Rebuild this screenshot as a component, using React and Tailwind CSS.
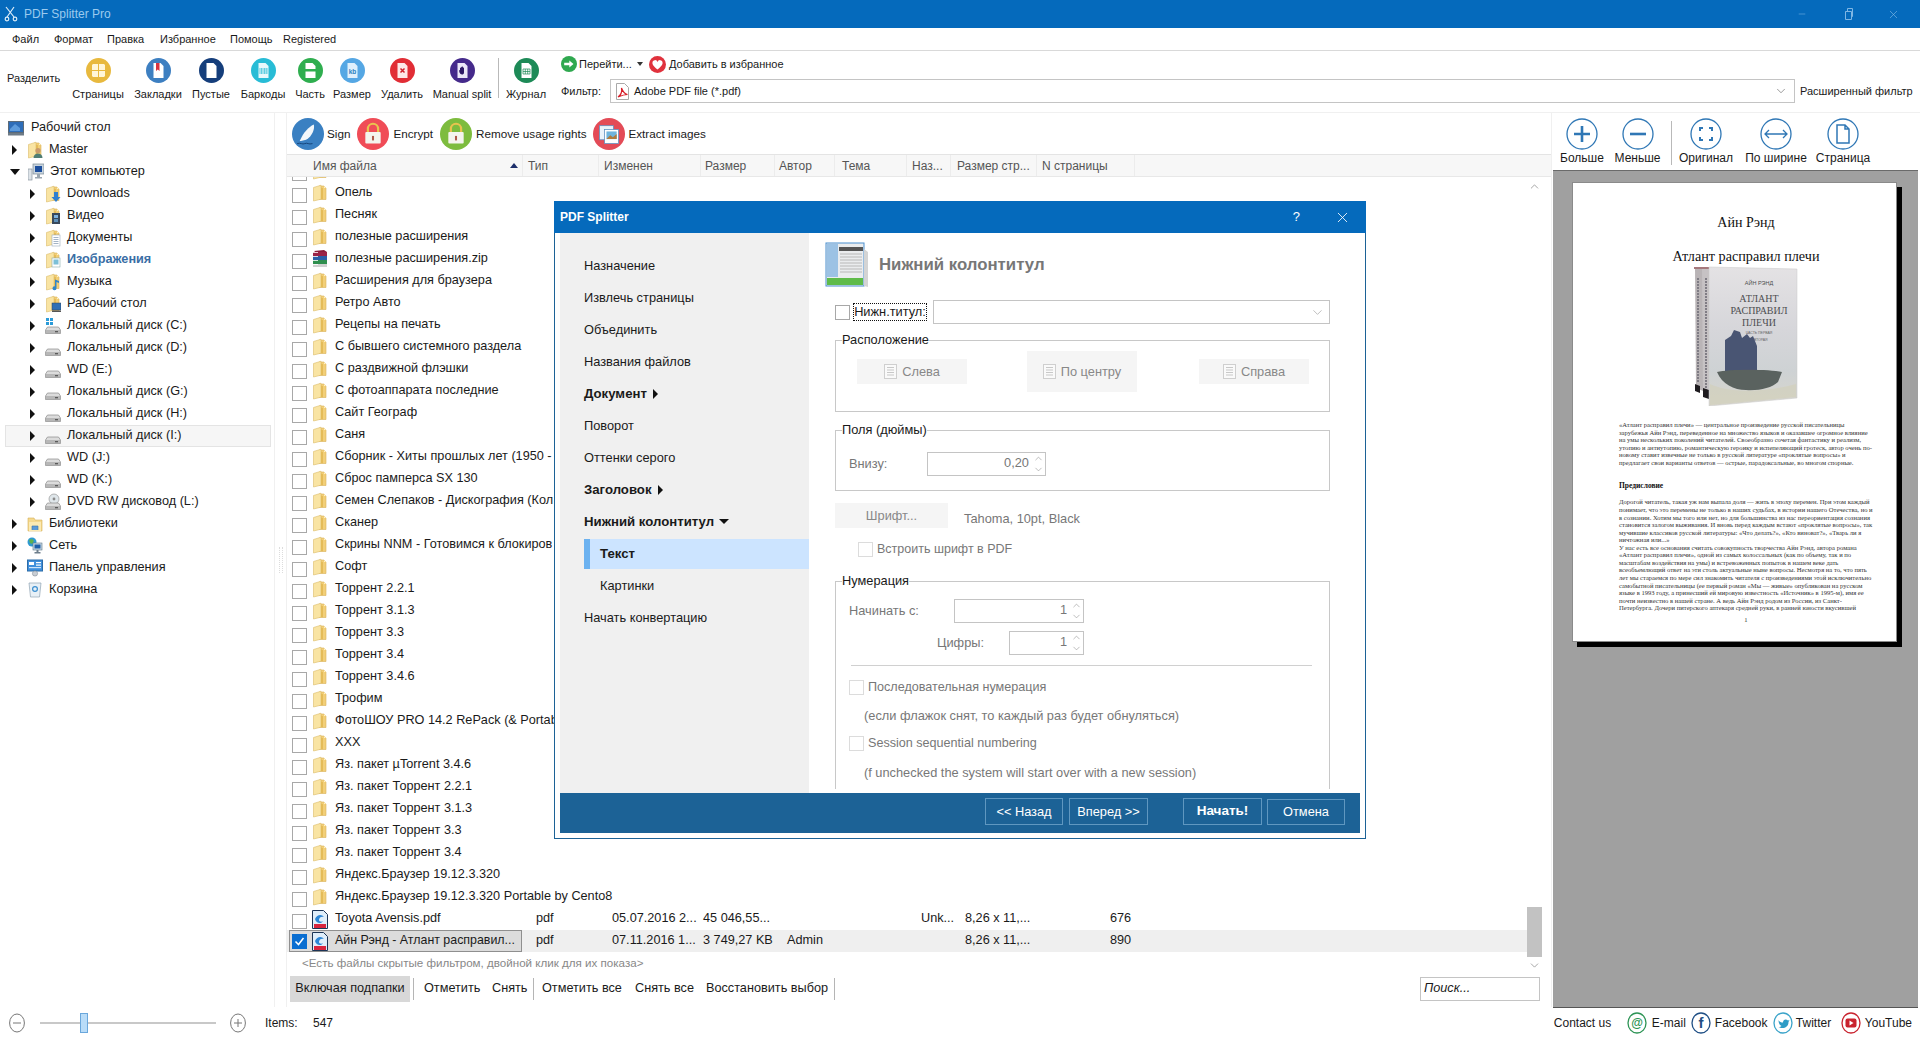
import { ChevronDown, ChevronUp, X, Minus } from 'lucide-react'

const Folder = () => (
  <svg width="16" height="18" viewBox="0 0 16 18" className="shrink-0">
    <path d="M7 2h5l2 2v11.5H7z" fill="#f2cf78" stroke="#d8b25c" strokeWidth=".6" />
    <path d="M12 2l2 2h-2z" fill="#fff3c9" />
    <path d="M1.5 3.5L9 1.2v14L1.5 17z" fill="#f9e4a3" stroke="#dcbc69" strokeWidth=".6" />
    <path d="M9 3.5l2 .8v11l-2-.2z" fill="#e4bb58" />
  </svg>
)

const FolderBadge = ({ kind }) => (
  <span className="relative flex h-[18px] w-4 shrink-0">
    <Folder />
    <svg width="12" height="13" viewBox="0 0 12 13" className="absolute left-[4px] top-[5px]">
      {kind === 'user' && <><circle cx="7" cy="4.5" r="2.6" fill="#c99a6c" /><path d="M2.5 12c0-3 2-4.5 4.5-4.5s4.5 1.5 4.5 4.5z" fill="#4f7d74" /></>}
      {kind === 'down' && <path d="M5 2h4v5h2.5L7 12 2.5 7H5z" fill="#2f7fd0" />}
      {kind === 'video' && <><rect x="3" y="1" width="8" height="11" fill="#38495c" /><rect x="5" y="3" width="4" height="3" fill="#7cb2df" /><rect x="5" y="7" width="4" height="3" fill="#5c8fba" /></>}
      {kind === 'doc' && <><rect x="3" y="1" width="8" height="11" fill="#fff" stroke="#9ab" strokeWidth=".6" /><path d="M4.5 3.5h5M4.5 5.5h5M4.5 7.5h5M4.5 9.5h5" stroke="#7c93ad" strokeWidth=".7" /></>}
      {kind === 'image' && <><rect x="3" y="2" width="8" height="9" fill="#fff" stroke="#8aa" strokeWidth=".6" /><rect x="4.5" y="3.5" width="5" height="5" fill="#7cc0d8" /></>}
      {kind === 'music' && <path d="M6 1.5l4 1.5v2L7.5 4v6.2A2 2 0 1 1 6 8.4z" fill="#2f86c8" />}
      {kind === 'desk' && <><rect x="3" y="3" width="9" height="7" fill="#2e6fb5" stroke="#345" strokeWidth=".5" /><rect x="3" y="10.5" width="9" height="1.5" fill="#555" /></>}
    </svg>
  </span>
)

const Drive = ({ os, disc }) => (
  <svg width="16" height="18" viewBox="0 0 16 18" className="shrink-0">
    {os && <path d="M1 1h3v3H1zM5 1h3v3H5zM1 5h3v3H1zM5 5h3v3H5z" fill="#2b9bd8" />}
    {disc && <><circle cx="9" cy="6" r="5" fill="#dfe6ea" stroke="#8a8a8a" strokeWidth=".6" /><circle cx="9" cy="6" r="1.4" fill="#8a8a8a" /></>}
    <path d="M2.5 10h11l2 3v3.5H.5V13z" fill="#dcdcdc" stroke="#8a8a8a" strokeWidth=".7" />
    <rect x="1" y="13" width="14" height="3" fill="#b7b7b7" />
    <rect x="10" y="14" width="3" height="1.3" fill="#5a5a5a" />
  </svg>
)

const Desktop = () => (
  <svg width="16" height="15" viewBox="0 0 16 15" className="shrink-0">
    <rect x=".5" y=".5" width="15" height="11" fill="#2e6db8" stroke="#5d6b78" />
    <path d="M2 8l5-5 5 4v3H2z" fill="#5d9bdc" />
    <rect y="12" width="16" height="2.5" fill="#6e7b86" />
  </svg>
)

const Computer = () => (
  <svg width="16" height="18" viewBox="0 0 16 18" className="shrink-0">
    <rect x="5" y="1" width="11" height="10" fill="#c8d4de" stroke="#7b8a96" strokeWidth=".7" />
    <rect x="7" y="3" width="7" height="6" fill="#1d4f9e" />
    <rect x="0" y="6" width="4" height="11" fill="#dde3e8" stroke="#8a96a0" strokeWidth=".7" />
    <path d="M9 11h3v3h2v1.5H7V14h2z" fill="#9aa6b0" />
  </svg>
)

const Libraries = () => (
  <svg width="16" height="18" viewBox="0 0 16 18" className="shrink-0">
    <path d="M1 3h6l1 2h7v11H1z" fill="#f5d98e" stroke="#d3ae58" strokeWidth=".6" />
    <rect x="2" y="7" width="12" height="9" fill="#fbeab4" />
    <path d="M5 15v-4h6v4" fill="#5a9ad8" stroke="#3a72ac" strokeWidth=".6" />
  </svg>
)

const Network = () => (
  <svg width="16" height="18" viewBox="0 0 16 18" className="shrink-0">
    <circle cx="5" cy="5" r="4.5" fill="#2f9ad1" />
    <path d="M2 3l3-1 2 2-2 3-2-1z" fill="#5fb04f" />
    <rect x="6" y="6" width="9" height="7" fill="#c8d8e4" stroke="#5d7588" strokeWidth=".6" />
    <rect x="7.5" y="7.5" width="6" height="4" fill="#1e5ea8" />
    <path d="M9.5 13h2v2h2v1.5h-6V15h2z" fill="#6e7e8c" />
  </svg>
)

const ControlPanel = () => (
  <svg width="16" height="18" viewBox="0 0 16 18" className="shrink-0">
    <rect x=".5" y="1" width="15" height="11" fill="#3f8fdc" stroke="#2d6ca8" />
    <rect x="2" y="3" width="5" height="3" fill="#fff" />
    <rect x="9" y="3" width="5" height="1.2" fill="#fff" />
    <rect x="9" y="5.5" width="5" height="1.2" fill="#fff" />
    <rect x="2" y="8" width="12" height="1.2" fill="#cfe4f8" />
    <circle cx="8" cy="14.5" r="2.6" fill="#c9ced4" stroke="#87909a" strokeWidth=".6" />
  </svg>
)

const Recycle = () => (
  <svg width="16" height="18" viewBox="0 0 16 18" className="shrink-0">
    <path d="M2 2h12l-1.5 14h-9z" fill="#e8f0f6" stroke="#8fa3b3" strokeWidth=".7" />
    <circle cx="8" cy="8" r="2.4" fill="none" stroke="#3b8fd0" strokeWidth="1.2" />
  </svg>
)

const ZipIcon = () => (
  <svg width="16" height="18" viewBox="0 0 16 18" className="shrink-0">
    <path d="M2 1l10-1 3 2-10 1.5z" fill="#8a1c3a" />
    <rect x="1" y="2" width="14" height="4" fill="#9b2347" />
    <rect x="1" y="6" width="14" height="4" fill="#2b5fa8" />
    <rect x="1" y="10" width="14" height="4" fill="#2f8f4e" />
    <path d="M1 14h14v3H1z" fill="#d0d0d0" />
    <path d="M1 2.5h5M1 6.500h5M1 10.500h5M1 14.500h5" stroke="#fff" strokeWidth=".8" />
  </svg>
)

const PdfFile = () => (
  <svg width="16" height="19" viewBox="0 0 16 19" className="shrink-0">
    <path d="M.5.5h11l4 4v14H.5z" fill="#dfeefa" stroke="#1c3556" />
    <path d="M3 9c2-5 7-5 9-2-2-1-5 0-5 3 0 2 3 2 4 1-1 3-7 3-8-2z" fill="#2c86d6" />
    <rect x="2" y="14" width="12" height="4" fill="#d8263f" />
  </svg>
)

const AcrobatIcon = () => (
  <svg width="15" height="17" viewBox="0 0 15 17" className="shrink-0">
    <path d="M1.500.5h8l4 4v12h-12z" fill="#fff" stroke="#a9a9a9" />
    <path d="M3 14c3-2 4-6 3.500-9 1.500 4 3 6 6 6.500-3 0-6 1-9.500 2.500z" fill="none" stroke="#d8202a" strokeWidth="1.2" />
  </svg>
)

const Round = ({ c, size = 25, children }) => (
  <svg width={size} height={size} viewBox="0 0 25 25" className="shrink-0">
    <circle cx="12.5" cy="12.5" r="12.5" fill={c} />
    {children}
  </svg>
)

const Doc = ({ fill = '#fff' }) => <path d="M7.500 5h7l3 3v12h-10z" fill={fill} />

const ToolBtn = ({ w, label, icon }) => (
  <div className={`flex flex-col items-center pt-[7px] ${w}`}>
    {icon}
    <span className="mt-[3px] h-4 whitespace-nowrap text-[11px] leading-4">{label}</span>
  </div>
)

const tools = [
  { w: 'w-[60px]', label: 'Страницы', icon: <Round c="#e8b93e"><path d="M7 6h5v6H6v-5zM13 6h5l1 1v5h-6zM6 13h6v6H7l-1-1zM13 13h6v5l-1 1h-5z" fill="#fff6d8" /></Round> },
  { w: 'w-[60px]', label: 'Закладки', icon: <Round c="#3d7fc1"><Doc /><path d="M10 5h3.500v8l-1.700-1.600L10 13z" fill="#d8333f" /></Round> },
  { w: 'w-[46px]', label: 'Пустые', icon: <Round c="#153e7b"><Doc /></Round> },
  { w: 'w-[58px]', label: 'Баркоды', icon: <Round c="#28bcd6"><Doc fill="#e8f8fb" /><path d="M9 10v6M10.500 10v6M12 10v6M13.500 10v6M15 10v6M16 10v6" stroke="#28bcd6" strokeWidth=".7" /></Round> },
  { w: 'w-[36px]', label: 'Часть', icon: <Round c="#2fae4f"><Doc /><rect x="6" y="11" width="13" height="2.500" fill="#2fae4f" /></Round> },
  { w: 'w-[48px]', label: 'Размер', icon: <Round c="#55a7e4"><Doc fill="#dff0fc" /><text x="12.500" y="16" textAnchor="middle" fontSize="6.500" fontWeight="700" fill="#2a7fc0" fontFamily="Liberation Sans">kb</text></Round> },
  { w: 'w-[52px]', label: 'Удалить', icon: <Round c="#e12d35"><Doc fill="#fde8e8" /><path d="M10.500 10.500l4 4M14.500 10.500l-4 4" stroke="#d0202a" strokeWidth="1.5" /></Round> },
  { w: 'w-[68px]', label: 'Manual split', icon: <Round c="#452a8b"><Doc fill="#ece8f8" /><path d="M10 12V9.500l1 .5V8.500l1 1V8l1 1.200 1 .8v4.500c0 1.500-1 2-2 2s-2-.8-2.500-2L9 12.500z" fill="#2e1a66" /></Round> },
]

const Lock = ({ shackle }) => (
  <>
    <path d="M8.500 11V8.500a4 4 0 0 1 8 0V11" fill="none" stroke={shackle} strokeWidth="1.7" />
    <rect x="6.500" y="11" width="12" height="9" rx=".8" fill="#f4f4ee" />
    <rect x="11.700" y="14" width="1.600" height="3.500" fill="#b05a4a" />
  </>
)

const actions = [
  { label: 'Sign', ml: 'ml-0', tw: 'ml-[3px]', icon: <Round c="#3a80c2" size={32}><path d="M6 18c3-7 7-11 11-13 1 3-1 9-6 12l-4 1z" fill="#f2f6fa" /><path d="M4 20c3-1 4 1 6 0s3 1 6 0" stroke="#123f72" strokeWidth=".7" fill="none" /></Round> },
  { label: 'Encrypt', ml: 'ml-[7px]', tw: 'ml-[4px]', icon: <Round c="#f04c57" size={32}><Lock shackle="#e9c34f" /></Round> },
  { label: 'Remove usage rights', ml: 'ml-[7px]', tw: 'ml-[4px]', icon: <Round c="#7dbc3e" size={32}><Lock shackle="#e9c34f" /></Round> },
  { label: 'Extract images', ml: 'ml-[7px]', tw: 'ml-[3px]', icon: <Round c="#e34b57" size={32}><rect x="5" y="6" width="11" height="11" fill="#eaf3fb" stroke="#5b8fc0" strokeWidth=".6" /><rect x="9" y="9" width="11" height="11" fill="#fff" stroke="#5b8fc0" strokeWidth=".6" /><rect x="10.500" y="10.500" width="8" height="6" fill="#6fb4de" /><path d="M10.500 16.500l3-3 2 1.500 3-2.500v4z" fill="#b07a3c" /></Round> },
]

const treeRows = [
  { level: 0, label: 'Рабочий стол', icon: <Desktop /> },
  { level: 1, arrow: 'r', label: 'Master', icon: <FolderBadge kind="user" /> },
  { level: 1, arrow: 'd', label: 'Этот компьютер', icon: <Computer /> },
  { level: 2, arrow: 'r', label: 'Downloads', icon: <FolderBadge kind="down" /> },
  { level: 2, arrow: 'r', label: 'Видео', icon: <FolderBadge kind="video" /> },
  { level: 2, arrow: 'r', label: 'Документы', icon: <FolderBadge kind="doc" /> },
  { level: 2, arrow: 'r', label: 'Изображения', bold: true, icon: <FolderBadge kind="image" /> },
  { level: 2, arrow: 'r', label: 'Музыка', icon: <FolderBadge kind="music" /> },
  { level: 2, arrow: 'r', label: 'Рабочий стол', icon: <FolderBadge kind="desk" /> },
  { level: 2, arrow: 'r', label: 'Локальный диск (C:)', icon: <Drive os /> },
  { level: 2, arrow: 'r', label: 'Локальный диск (D:)', icon: <Drive /> },
  { level: 2, arrow: 'r', label: 'WD (E:)', icon: <Drive /> },
  { level: 2, arrow: 'r', label: 'Локальный диск (G:)', icon: <Drive /> },
  { level: 2, arrow: 'r', label: 'Локальный диск (H:)', icon: <Drive /> },
  { level: 2, arrow: 'r', label: 'Локальный диск (I:)', selected: true, icon: <Drive /> },
  { level: 2, arrow: 'r', label: 'WD (J:)', icon: <Drive /> },
  { level: 2, arrow: 'r', label: 'WD (K:)', icon: <Drive /> },
  { level: 2, arrow: 'r', label: 'DVD RW дисковод (L:)', icon: <Drive disc /> },
  { level: 1, arrow: 'r', label: 'Библиотеки', icon: <Libraries /> },
  { level: 1, arrow: 'r', label: 'Сеть', icon: <Network /> },
  { level: 1, arrow: 'r', label: 'Панель управления', icon: <ControlPanel /> },
  { level: 1, arrow: 'r', label: 'Корзина', icon: <Recycle /> },
]

const levelPad = ['pl-[2px]', 'pl-[6px]', 'pl-[24px]']

const folders = [
  '', 'Опель', 'Песняк', 'полезные расширения', 'полезные расширения.zip', 'Расширения для браузера', 'Ретро Авто',
  'Рецепы на печать', 'С бывшего системного раздела', 'С раздвижной флэшки', 'С фотоаппарата последние', 'Сайт Географ', 'Саня',
  'Сборник - Хиты прошлых лет (1950 -', 'Сброс памперса SX 130', 'Семен Слепаков - Дискография (Кол', 'Сканер',
  'Скрины NNM - Готовимся к блокиров', 'Софт', 'Торрент 2.2.1', 'Торрент 3.1.3', 'Торрент 3.3', 'Торрент 3.4', 'Торрент 3.4.6',
  'Трофим', 'ФотоШОУ PRO 14.2 RePack (& Portab', 'XXX', 'Яз. пакет µTorrent 3.4.6', 'Яз. пакет Торрент 2.2.1', 'Яз. пакет Торрент 3.1.3',
  'Яз. пакет Торрент 3.3', 'Яз. пакет Торрент 3.4', 'Яндекс.Браузер 19.12.3.320', 'Яндекс.Браузер 19.12.3.320 Portable by Cento8',
]

const columns = [
  { w: 'w-[236px]', pl: 'pl-[26px]', label: 'Имя файла', sort: true },
  { w: 'w-[76px]', pl: 'pl-[5px]', label: 'Тип' },
  { w: 'w-[102px]', pl: 'pl-[5px]', label: 'Изменен' },
  { w: 'w-[74px]', pl: 'pl-[4px]', label: 'Размер' },
  { w: 'w-[60px]', pl: 'pl-[4px]', label: 'Автор' },
  { w: 'w-[72px]', pl: 'pl-[7px]', label: 'Тема' },
  { w: 'w-[44px]', pl: 'pl-[5px]', label: 'Наз...' },
  { w: 'w-[86px]', pl: 'pl-[6px]', label: 'Размер стр...' },
  { w: 'w-[98px]', pl: 'pl-[5px]', label: 'N страницы' },
]

const Check = ({ on, muted }) => (
  <span className={`flex h-[15px] w-[15px] shrink-0 items-center justify-center border ${on ? 'border-[#0a6ed1] bg-[#0a6ed1]' : muted ? 'border-[#dcdcdc] bg-white' : 'border-[#a8a8a8] bg-white'}`}>
    {on && (
      <svg width="11" height="11" viewBox="0 0 11 11"><path d="M1.500 5.500l3 3 5-6.500" fill="none" stroke="#fff" strokeWidth="1.5" /></svg>
    )}
  </span>
)

const FileRow = ({ name, icon, cells, selected }) => (
  <div className={`flex h-[22px] items-center pl-[2px] text-[12.7px] [&>span]:pb-[1px] ${selected ? 'bg-[#efefef]' : ''}`}>
    <div className={`flex h-[22px] w-[233px] shrink-0 items-center border pl-[2px] ${selected ? 'border-[#8f8f8f] bg-[#dcdcdc]' : 'border-transparent'}`}>
      <span className={`flex ${selected ? 'mt-px' : 'mt-[4px]'}`}><Check on={selected} /></span>
      <span className="ml-[5px] flex w-4 shrink-0">{icon}</span>
      <span className={`ml-[7px] whitespace-nowrap pb-[1px] ${selected ? 'text-[12.4px]' : ''}`}>{name}</span>
    </div>
    {cells && (
      <>
        <span className="ml-[14px] w-[76px] shrink-0">pdf</span>
        <span className="w-[91px] shrink-0 whitespace-nowrap">{cells.date}</span>
        <span className="w-[84px] shrink-0 whitespace-nowrap">{cells.size}</span>
        <span className="w-[134px] shrink-0">{cells.author}</span>
        <span className="w-[44px] shrink-0">{cells.subject}</span>
        <span className="w-[145px] shrink-0 whitespace-nowrap">8,26 x 11,...</span>
        <span>{cells.pages}</span>
      </>
    )}
  </div>
)

const GroupBox = ({ title, className, children }) => (
  <div className={`relative ml-[26px] w-[495px] border border-[#c8c8c8] ${className}`}>
    <span className="absolute left-[6px] top-[-9px] bg-white leading-4">{title}</span>
    {children}
  </div>
)

const Spin = ({ w, value }) => (
  <div className={`flex h-6 items-center justify-end border border-[#c4c4c4] ${w}`}>
    <span className="pb-[2px] text-[#777]">{value}</span>
    <span className="ml-[3px] mr-[1px] flex w-[12px] flex-col items-center text-[#999]">
      <ChevronUp size={11} strokeWidth={1.4} />
      <ChevronDown size={11} strokeWidth={1.4} />
    </span>
  </div>
)

const AlignBtn = ({ label, cls }) => (
  <div className={`flex w-[110px] items-center justify-center bg-[#f5f5f5] text-[#888] ${cls}`}>
    <svg width="13" height="15" viewBox="0 0 13 15" className="mr-[5px]">
      <rect x=".5" y=".5" width="12" height="14" fill="#fafafa" stroke="#cfcfcf" />
      <path d="M3 3.500h7M3 6h7M3 8.500h7M3 11h7" stroke="#c8c8c8" />
    </svg>
    {label}
  </div>
)

const navItems = [
  { label: 'Назначение' },
  { label: 'Извлечь страницы' },
  { label: 'Объединить' },
  { label: 'Названия файлов' },
  { label: 'Документ', bold: true, caret: 'r' },
  { label: 'Поворот' },
  { label: 'Оттенки серого' },
  { label: 'Заголовок', bold: true, caret: 'r' },
  { label: 'Нижний колонтитул', bold: true, caret: 'd' },
  { label: 'Текст', sub: true, selected: true },
  { label: 'Картинки', sub: true },
  { label: 'Начать конвертацию' },
]

const pageTop = [
  '«Атлант расправил плечи» — центральное произведение русской писательницы',
  'зарубежья Айн Рэнд, переведенное на множество языков и оказавшее огромное влияние',
  'на умы нескольких поколений читателей. Своеобразно сочетая фантастику и реализм,',
  'утопию и антиутопию, романтическую героику и испепеляющий гротеск, автор очень по-',
  'новому ставит извечные не только в русской литературе «проклятые вопросы» и',
  'предлагает свои варианты ответов — острые, парадоксальные, во многом спорные.',
]

const pageBottom = [
  'Дорогой читатель, такая уж нам выпала доля — жить в эпоху перемен. При этом каждый',
  'понимает, что это перемены не только в наших судьбах, в истории нашего Отечества, но и',
  'в сознании. Хотим мы того или нет, но для большинства из нас переориентация сознания',
  'становится залогом выживания. И вновь перед каждым встают «проклятые вопросы», так',
  'мучившие классиков русской литературы: «Что делать?», «Кто виноват?», «Тварь ли я',
  'ничтожная или...»',
  'У нас есть все основания считать совокупность творчества Айн Рэнд, автора романа',
  '«Атлант расправил плечи», одной из самых колоссальных (как по объему, так и по',
  'масштабам воздействия на умы) и встревоженных попыток в нашем веке дать',
  'всеобъемлющий ответ на эти столь актуальные ныне вопросы. Несмотря на то, что пять',
  'лет мы стараемся по мере сил знакомить читателя с произведениями этой исключительно',
  'самобытной писательницы (ее первый роман «Мы — живые» опубликован на русском',
  'языке в 1993 году, а принесший ей мировую известность «Источник» в 1995-м), имя ее',
  'почти неизвестно в нашей стране. А ведь Айн Рэнд родом из России, из Санкт-',
  'Петербурга. Дочери питерского аптекаря средней руки, в ранней юности вкусившей',
]

const Book = () => (
  <svg width="104" height="140" viewBox="0 0 104 140" className="shrink-0">
    <defs>
      <linearGradient id="cover" x1="0" y1="0" x2="0" y2="1">
        <stop offset="0" stopColor="#e4e2e4" />
        <stop offset=".45" stopColor="#d6d6da" />
        <stop offset=".75" stopColor="#ced2d4" />
        <stop offset="1" stopColor="#d8d6cc" />
      </linearGradient>
      <filter id="soft"><feGaussianBlur stdDeviation=".5" /></filter>
    </defs>
    <path d="M1 2l8-1v124l-7-3z" fill="#b9b4b6" />
    <path d="M8 2l8-1v131l-7-3z" fill="#c6c2c4" />
    <path d="M0 1h16v2H0z" fill="#a5787c" />
    <path d="M4 12v104M12 12v112" stroke="#7f7c84" strokeWidth="2" strokeDasharray="2 1" />
    <path d="M1 118l5 2v7l-5-2zM9 122l6 2v9l-6-2z" fill="#1f1c20" />
    <path d="M15 1l88 2v129l-88 8z" fill="url(#cover)" stroke="#c8c8c8" strokeWidth=".5" />
    <text x="65" y="19" textAnchor="middle" fontSize="5.500" fill="#4d4d50" fontFamily="Liberation Sans">АЙН РЭНД</text>
    <text x="65" y="36" textAnchor="middle" fontSize="10" fill="#4d4d50" fontFamily="Liberation Serif">АТЛАНТ</text>
    <text x="65" y="48" textAnchor="middle" fontSize="10" fill="#4d4d50" fontFamily="Liberation Serif">РАСПРАВИЛ</text>
    <text x="65" y="60" textAnchor="middle" fontSize="10" fill="#4d4d50" fontFamily="Liberation Serif">ПЛЕЧИ</text>
    <text x="65" y="68" textAnchor="middle" fontSize="3.500" fill="#666" fontFamily="Liberation Sans">ЧАСТЬ ПЕРВАЯ</text>
    <text x="65" y="75" textAnchor="middle" fontSize="3.500" fill="#666" fontFamily="Liberation Sans">И ВТОРАЯ</text>
    <g filter="url(#soft)">
      <path d="M31 105V74l6-4 3-6 6 2 2 6 5-4 3 4 3-2 4 10v25z" fill="#4a5573" />
      <path d="M23 106c12-3 52-3 65 0l-4 10c-6 6-20 9-32 8-12 0-24-6-29-18z" fill="#5a625f" />
      <path d="M16 118c16 8 50 10 86 0v13l-86 8z" fill="#d2d0bc" opacity=".7" />
    </g>
  </svg>
)

const PreviewTool = ({ w, label, children }) => (
  <div className={`flex flex-col items-center ${w}`}>
    <svg width="32" height="32" viewBox="0 0 32 32" fill="none" stroke="#2f77b5">
      <circle cx="16" cy="16" r="15" strokeWidth="1.3" />
      {children}
    </svg>
    <span className="h-4 whitespace-nowrap text-[12px] leading-4">{label}</span>
  </div>
)

const Social = ({ c, children }) => (
  <svg width="20" height="22" viewBox="0 0 20 22" className="shrink-0">
    <ellipse cx="10" cy="11" rx="9" ry="10" fill="#fff" stroke={c} strokeWidth="1.3" />
    {children}
  </svg>
)

export default function App() {
  return (
    <div className="relative flex h-[1040px] w-[1920px] flex-col overflow-hidden bg-white font-['Liberation_Sans',sans-serif] text-[#1a1a1a]">
      {/* title bar */}
      <div className="flex h-[28px] items-center bg-[#056abc]">
        <svg width="14" height="16" viewBox="0 0 14 16" className="ml-[4px]" fill="none" stroke="#dcecf8" strokeWidth="1.2">
          <path d="M2 1l8 10M10 1L3 11" />
          <circle cx="3" cy="13" r="1.800" />
          <circle cx="11" cy="13" r="1.800" />
        </svg>
        <span className="ml-[6px] pb-[1px] text-[12px] text-[#9ccaee]">PDF Splitter Pro</span>
        <div className="ml-auto flex items-center text-[#7fb6e4]">
          <Minus size={10} strokeWidth={1.3} />
          <svg width="10" height="12" viewBox="0 0 10 12" fill="none" stroke="currentColor" className="ml-[37px]"><path d="M1.500 3.500h6v8h-6zM3.500 3.500v-3h5v8h-1" /></svg>
          <X size={13} strokeWidth={1.2} className="ml-[33px] mr-[20px]" />
        </div>
      </div>

      {/* menu */}
      <div className="flex h-[23px] items-center border-b border-[#d9d9d9] pl-[12px] text-[11px]">
        <span className="w-[42px]">Файл</span>
        <span className="w-[53px]">Формат</span>
        <span className="w-[53px]">Правка</span>
        <span className="w-[70px]">Избранное</span>
        <span className="w-[53px]">Помощь</span>
        <span>Registered</span>
      </div>

      {/* toolbar */}
      <div className="flex h-[61px] text-[11px]">
        <span className="w-[68px] pl-[7px] pt-[19px]">Разделить</span>
        {tools.map((t) => <ToolBtn key={t.label} {...t} />)}
        <span className="ml-[2px] mt-[7px] h-[40px] w-px bg-[#b9b9b9]" />
        <ToolBtn
          w="w-[52px] ml-px"
          label="Журнал"
          icon={<Round c="#1d8a57"><Doc /><path d="M9 11h7v5H9zM9 13.500h7M11.300 11v5M13.700 11v5" stroke="#1d8a57" strokeWidth=".7" fill="none" /></Round>}
        />
        <div className="ml-[9px] flex flex-col pt-[5px]">
          <div className="flex h-4 items-center">
            <Round c="#2fa84f" size={16}><path d="M5 10.500h8V7l6.500 5.500L13 18v-3.500H5z" fill="#fff" /></Round>
            <span className="ml-[2px] w-[58px] whitespace-nowrap">Перейти...</span>
            <span className="h-0 w-0 border-x-[3px] border-t-[4px] border-x-transparent border-t-[#333]" />
            <span className="ml-[6px] flex">
              <Round c="#e0323d" size={17}><path d="M12.500 20C7 15.500 5 13 5 10a3.800 3.800 0 0 1 7.500-1A3.800 3.800 0 0 1 20 10c0 3-2 5.500-7.500 10z" fill="#fff" /></Round>
            </span>
            <span className="ml-[3px] whitespace-nowrap">Добавить в избранное</span>
          </div>
          <div className="mt-[7px] flex items-center">
            <span className="w-[49px]">Фильтр:</span>
            <div className="flex h-6 w-[1185px] items-center border border-[#c4c4c4] pl-[4px]">
              <AcrobatIcon />
              <span className="ml-[4px]">Adobe PDF file (*.pdf)</span>
              <ChevronDown size={14} strokeWidth={1} className="ml-auto mr-[6px] text-[#555]" />
            </div>
            <span className="ml-[5px] whitespace-nowrap">Расширенный фильтр</span>
          </div>
        </div>
      </div>

      {/* main */}
      <div className="flex h-[895px] border-t border-[#f0f0f0]">
        {/* tree */}
        <div className="w-[275px] shrink-0 border-r border-[#f0f0f0] pt-[4px] text-[12.7px]">
          {treeRows.map((r, i) => (
            <div key={i} className={`ml-[5px] mr-[3px] flex h-[22px] items-center border ${levelPad[r.level]} ${r.selected ? 'border-[#e4e4e4] bg-[#f6f6f6]' : 'border-transparent'}`}>
              {r.arrow === 'r' && <span className="mr-[10px] h-0 w-0 border-y-[5px] border-l-[5px] border-y-transparent border-l-[#111]" />}
              {r.arrow === 'd' && <span className="mr-[6px] h-0 w-0 -translate-x-[2px] border-x-[5px] border-t-[6px] border-x-transparent border-t-[#111]" />}
              {r.icon}
              <span className={`whitespace-nowrap pb-[1px] ${r.level === 0 ? 'ml-[7px]' : 'ml-[6px]'} ${r.bold ? 'font-bold text-[#3a6ea5]' : ''}`}>{r.label}</span>
            </div>
          ))}
        </div>
        <div className="flex w-[11px] shrink-0 items-center justify-center">
          <span className="h-[26px] w-[4px] border-x border-dotted border-[#dcdcdc]" />
        </div>

        {/* files */}
        <div className="w-[1265px] shrink-0 border-l border-[#f0f0f0]">
          <div className="flex h-[42px] items-center border-b border-[#e4e4e4] pl-[5px] text-[11.7px]">
            {actions.map((a) => (
              <div key={a.label} className={`flex items-center ${a.ml}`}>
                {a.icon}
                <span className={`whitespace-nowrap ${a.tw}`}>{a.label}</span>
              </div>
            ))}
          </div>
          <div className="flex h-[22px] items-center border-b border-[#e8e8e8] bg-[#f7f7f7] text-[12px] text-[#555]">
            {columns.map((c) => (
              <div key={c.label} className={`flex h-full items-center whitespace-nowrap border-r border-[#ececec] ${c.w} ${c.pl}`}>
                {c.label}
                {c.sort && <span className="ml-[133px] h-0 w-0 border-x-[4px] border-b-[5px] border-x-transparent border-b-[#1d2f6b]" />}
              </div>
            ))}
          </div>
          <div className="flex h-[796px]">
            <div className="w-[1240px] shrink-0 overflow-hidden">
              <div className="-mt-[17px]">
                {folders.map((f, i) => (
                  <FileRow key={i} name={f} icon={f.endsWith('.zip') ? <ZipIcon /> : <Folder />} />
                ))}
                <FileRow name="Toyota Avensis.pdf" icon={<PdfFile />} cells={{ date: '05.07.2016 2...', size: '45 046,55...', author: '', subject: 'Unk...', pages: '676' }} />
                <FileRow selected name="Айн Рэнд - Атлант расправил..." icon={<PdfFile />} cells={{ date: '07.11.2016 1...', size: '3 749,27 KB', author: 'Admin', subject: '', pages: '890' }} />
                <div className="flex h-[22px] items-center pb-[1px] pl-[15px] text-[11.6px] text-[#888]">&lt;Есть файлы скрытые фильтром, двойной клик для их показа&gt;</div>
              </div>
            </div>
            <div className="flex w-[15px] shrink-0 flex-col items-center text-[#777]">
              <span className="flex h-[18px] items-center"><ChevronUp size={13} strokeWidth={1.2} /></span>
              <span className="flex-1" />
              <span className="h-[50px] w-full bg-[#c2c2c2]" />
              <span className="flex h-4 items-center"><ChevronDown size={13} strokeWidth={1.2} /></span>
            </div>
          </div>
          <div className="mt-[3px] flex h-[26px] items-center pl-[3px] text-[12.7px]">
            <span className="flex h-full w-[120px] items-center justify-center whitespace-nowrap bg-[#d8d8d8] pb-[1px]">Включая подпапки</span>
            <span className="ml-[3px] h-[22px] w-px bg-[#b5b5b5]" />
            <span className="ml-[10px] w-[68px] pb-[1px]">Отметить</span>
            <span className="w-[41px] pb-[1px]">Снять</span>
            <span className="h-[22px] w-px bg-[#b5b5b5]" />
            <span className="ml-[8px] w-[93px] whitespace-nowrap pb-[1px]">Отметить все</span>
            <span className="w-[71px] whitespace-nowrap pb-[1px]">Снять все</span>
            <span className="w-[128px] whitespace-nowrap pb-[1px]">Восстановить выбор</span>
            <span className="h-[22px] w-px bg-[#b5b5b5]" />
            <span className="ml-auto mr-[11px] flex h-6 w-[120px] items-center border border-[#c4c4c4] pl-[3px] italic">Поиск...</span>
          </div>
        </div>

        {/* preview */}
        <div className="flex-1 border-l border-[#f0f0f0] pl-px pr-[2px]">
          <div className="flex h-[57px] pl-[1px] pt-[5px]">
            <PreviewTool w="w-[56px]" label="Больше"><path d="M16 8v16M8 16h16" strokeWidth="2.600" /></PreviewTool>
            <PreviewTool w="w-[55px]" label="Меньше"><path d="M8 16h16" strokeWidth="2.600" /></PreviewTool>
            <span className="ml-[6px] mr-[3px] mt-[3px] h-[44px] w-px bg-[#b9b9b9]" />
            <PreviewTool w="w-[62px]" label="Оригинал"><path d="M10 13v-3h3M19 10h3v3M22 19v3h-3M13 22h-3v-3" strokeWidth="2" /></PreviewTool>
            <PreviewTool w="w-[78px]" label="По ширине"><path d="M5 16h22M9 12l-4 4 4 4M23 12l4 4-4 4" strokeWidth="1.3" /></PreviewTool>
            <PreviewTool w="w-[56px]" label="Страница"><path d="M10 7h8l4 4v14H10zM18 7v4h4" strokeWidth="1.5" /></PreviewTool>
          </div>
          <div className="h-[838px] border-y border-b-[#555] border-t-[#6a6a6a] bg-[#a0a0a0] pl-[19px] pt-[11px]">
            <div className="h-[460px] w-[325px] border border-[#8a8a8a] bg-white pl-[46px] pr-[23px] pt-[32px] text-center font-['Liberation_Serif',serif] text-[#111] shadow-[5px_5px_0_#000]">
              <div className="h-4 text-[14px] leading-4">Айн Рэнд</div>
              <div className="mt-[16px] h-[18px] whitespace-nowrap text-[14.2px] leading-[18px]">Атлант расправил плечи</div>
              <div className="mt-[1px] flex justify-center"><Book /></div>
              <div className="mt-[15px] text-left text-[6.6px] leading-[7.56px] text-[#333]">
                {pageTop.map((l) => <div key={l} className="whitespace-nowrap">{l}</div>)}
                <div className="mt-[15px] h-[10px] text-[7.5px] font-bold leading-[10px] text-[#111]">Предисловие</div>
                <div className="mt-[7px]">
                  {pageBottom.map((l) => <div key={l} className="whitespace-nowrap">{l}</div>)}
                </div>
                <div className="mt-[4px] text-center">1</div>
              </div>
            </div>
          </div>
        </div>
      </div>

      {/* status bar */}
      <div className="flex flex-1 items-center pb-[1px] text-[12px]">
        <svg width="16" height="20" viewBox="0 0 16 20" fill="none" stroke="#777" className="ml-[9px]"><ellipse cx="8" cy="10" rx="7.400" ry="9" /><path d="M4 10h8" /></svg>
        <div className="relative ml-[15px] h-[2px] w-[176px] bg-[#c8c8c8]">
          <span className="absolute left-[40px] top-[-9px] h-5 w-2 border border-[#6aa7dc] bg-[#b9dcf8]" />
        </div>
        <svg width="16" height="20" viewBox="0 0 16 20" fill="none" stroke="#777" className="ml-[14px]"><ellipse cx="8" cy="10" rx="7.400" ry="9" /><path d="M4 10h8M8 6v8" /></svg>
        <span className="ml-[19px] w-[48px]">Items:</span>
        <span>547</span>
        <div className="ml-auto flex items-center pr-[8px]">
          <span className="w-[73px] whitespace-nowrap">Contact us</span>
          <Social c="#2d9455"><text x="10" y="15" textAnchor="middle" fontSize="12" fontWeight="700" fill="#2d9455" fontFamily="Liberation Sans">@</text></Social>
          <span className="ml-[5px] w-[39px]">E-mail</span>
          <Social c="#1f4f85"><text x="10" y="16" textAnchor="middle" fontSize="15" fontWeight="700" fill="#1f4f85" fontFamily="Liberation Sans">f</text></Social>
          <span className="ml-[4px] w-[58px]">Facebook</span>
          <Social c="#3aa3c9"><path d="M5 8c2 2 3 2.500 5 2.500 0-3 3-4 5-2l1.500-.5-1 2c0 4-3 6-6 6-2 0-3-.5-4-1 1.500 0 2.500-.5 3-1-1.500-.5-3-2.500-3-6z" fill="#2f9cc6" /></Social>
          <span className="ml-[3px] w-[45px]">Twitter</span>
          <Social c="#c9232f"><rect x="4.500" y="6.500" width="11" height="9" rx="2" fill="#c9232f" /><path d="M8.500 8.500l4 2.500-4 2.500z" fill="#fff" /></Social>
          <span className="ml-[4px]">YouTube</span>
        </div>
      </div>

      {/* dialog */}
      <div className="absolute left-[554px] top-[201px] flex h-[638px] w-[812px] flex-col border-x border-b border-[#1c6296] bg-white text-[12.8px]">
        <div className="-mx-px flex h-[32px] shrink-0 items-center bg-[#056abc] pl-[6px] text-[12px] font-bold text-white">
          <span>PDF Splitter</span>
          <span className="ml-auto text-[13px] font-normal">?</span>
          <X size={17} strokeWidth={1.2} className="ml-[34px] mr-[15px]" />
        </div>
        <div className="mx-[5px] flex h-[560px] shrink-0">
          <div className="w-[249px] shrink-0 bg-[#f0f0f0] pt-[17px]">
            {navItems.map((n) => (
              <div key={n.label} className="flex h-8 items-center">
                {n.selected ? (
                  <div className="ml-[24px] flex h-[30px] flex-1 items-center border-l-[6px] border-[#6cb2f0] bg-[#cce4ff] pl-[10px] text-[13.2px] font-bold">{n.label}</div>
                ) : (
                  <div className={`flex items-center ${n.sub ? 'ml-[40px]' : 'ml-[24px]'} ${n.bold ? 'text-[13.2px] font-bold' : ''}`}>
                    {n.label}
                    {n.caret === 'r' && <span className="ml-[6px] h-0 w-0 border-y-[5px] border-l-[5px] border-y-transparent border-l-[#111]" />}
                    {n.caret === 'd' && <span className="ml-[5px] h-0 w-0 border-x-[5px] border-t-[5px] border-x-transparent border-t-[#111]" />}
                  </div>
                )}
              </div>
            ))}
          </div>

          <div className="min-w-0 flex-1 overflow-hidden">
            <div className="ml-[16px] mt-[9px] flex h-[46px] items-center">
              <svg width="44" height="46" viewBox="0 0 44 46" className="shrink-0">
                <rect x="1" y="1" width="38" height="43" fill="#eaecee" stroke="#4a90d0" />
                <rect x="2" y="2" width="11" height="33" fill="#9cc2e4" />
                <rect x="14" y="5" width="24" height="4" fill="#555" />
                <path d="M15 12h22M15 15h22M15 18h22M15 21h22M15 24h22M15 27h22M15 30h22" stroke="#b8b8b8" strokeWidth="1.200" />
                <rect x="2" y="36" width="36" height="7" fill="#5fbb4a" />
                <path d="M39 44l4 1V10l-4-3z" fill="#d4d4d4" />
              </svg>
              <span className="ml-[10px] whitespace-nowrap text-[16.8px] font-bold text-[#777]">Нижний колонтитул</span>
            </div>

            <div className="ml-[26px] mt-[12px] flex h-6 w-[495px] items-center">
              <Check />
              <span className="ml-[3px] flex h-[18px] w-[74px] items-center justify-center border border-dotted border-[#111] pb-[1px]">Нижн.титул:</span>
              <div className="ml-[6px] flex h-6 flex-1 items-center justify-end border border-[#c4c4c4] pr-[4px] text-[#999]">
                <ChevronDown size={15} strokeWidth={1} />
              </div>
            </div>

            <GroupBox title="Расположение" className="mt-[16px] h-[72px]">
              <div className="flex items-center pl-[21px] pt-[10px]">
                <AlignBtn label="Слева" cls="h-[25px]" />
                <span className="w-[60px]" />
                <AlignBtn label="По центру" cls="h-[41px]" />
                <span className="w-[62px]" />
                <AlignBtn label="Справа" cls="h-[25px]" />
              </div>
            </GroupBox>

            <GroupBox title="Поля (дюймы)" className="mt-[18px] h-[61px]">
              <div className="flex items-center pl-[13px] pt-[21px] text-[#777]">
                <span className="w-[78px]">Внизу:</span>
                <Spin w="w-[119px]" value="0,20" />
              </div>
            </GroupBox>

            <div className="ml-[26px] mt-[12px] flex h-[25px] items-start">
              <span className="flex h-[25px] w-[113px] items-center justify-center bg-[#f5f5f5] text-[#888]">Шрифт...</span>
              <span className="ml-[16px] mt-[6px] text-[#777]">Tahoma, 10pt, Black</span>
            </div>

            <div className="ml-[49px] mt-[14px] flex h-[15px] items-center text-[12.5px] text-[#777]">
              <Check muted />
              <span className="ml-[4px]">Встроить шрифт в PDF</span>
            </div>

            <div className="relative ml-[26px] mt-[24px] h-[208px] w-[495px] border-x border-t border-[#c8c8c8] text-[#777]">
              <span className="absolute left-[6px] top-[-9px] bg-white leading-4 text-[#1a1a1a]">Нумерация</span>
              <div className="flex items-center pl-[13px] pt-[17px]">
                <span className="w-[105px]">Начинать с:</span>
                <Spin w="w-[130px]" value="1" />
              </div>
              <div className="ml-[101px] mt-[8px] flex items-center">
                <span className="w-[72px]">Цифры:</span>
                <Spin w="w-[75px]" value="1" />
              </div>
              <div className="ml-[15px] mt-[10px] h-px w-[461px] bg-[#d0d0d0]" />
              <div className="ml-[13px] mt-[14px] flex h-[15px] items-center text-[12.6px]">
                <Check muted />
                <span className="ml-[4px]">Последовательная нумерация</span>
              </div>
              <div className="ml-[28px] mt-[11px] h-5 whitespace-nowrap leading-5">(если флажок снят, то каждый раз будет обнуляться)</div>
              <div className="ml-[13px] mt-[10px] flex h-[15px] items-center text-[12.6px]">
                <Check muted />
                <span className="ml-[4px]">Session sequential numbering</span>
              </div>
              <div className="ml-[28px] mt-[12px] h-5 whitespace-nowrap leading-5">(f unchecked the system will start over with a new session)</div>
            </div>
          </div>
        </div>
        <div className="mx-[5px] flex h-[40px] shrink-0 items-start bg-[#1c6296] pt-[5px] text-white">
          <span className="ml-[425px] flex h-[27px] w-[78px] items-center justify-center border border-[#5f97c0]">&lt;&lt; Назад</span>
          <span className="ml-[6px] flex h-[27px] w-[79px] items-center justify-center border border-[#5f97c0]">Вперед &gt;&gt;</span>
          <span className="ml-[35px] flex h-[27px] w-[79px] items-center justify-center border border-[#5f97c0] text-[13.5px] font-bold">Начать!</span>
          <span className="ml-[5px] mt-px flex h-[26px] w-[78px] items-center justify-center border border-[#5f97c0]">Отмена</span>
        </div>
      </div>
    </div>
  )
}
